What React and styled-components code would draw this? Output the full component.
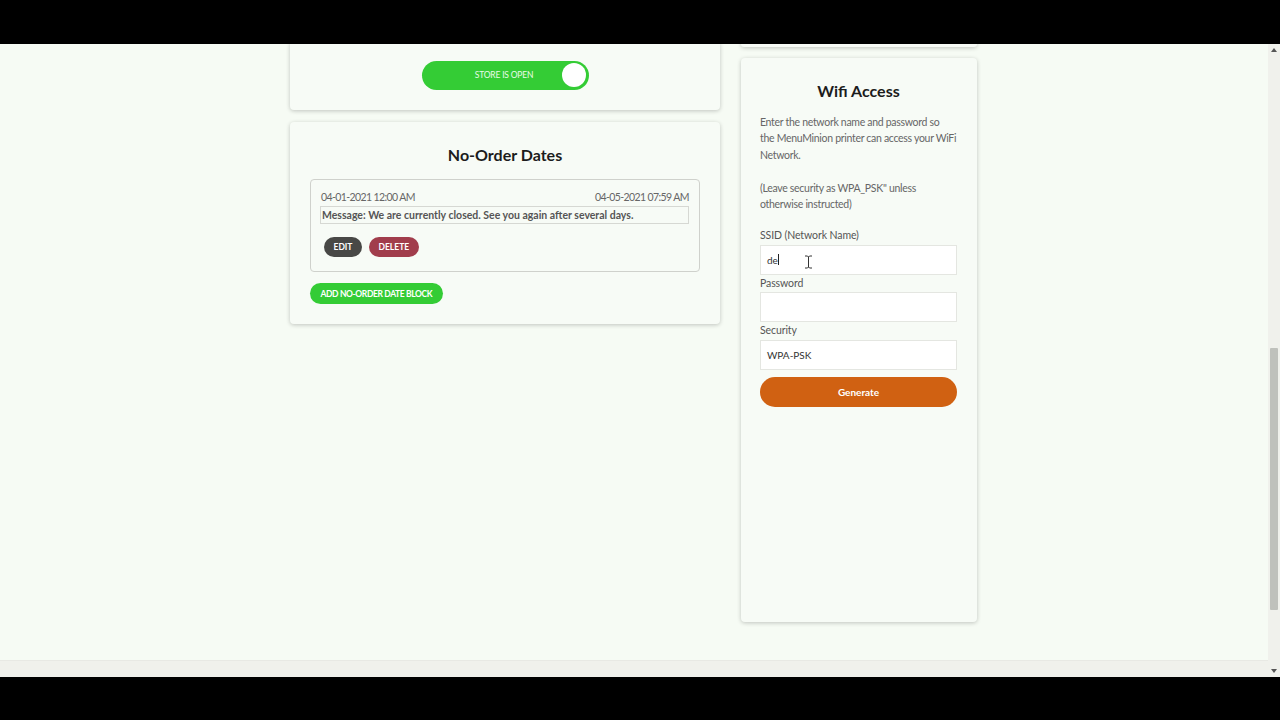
import React from 'react';
import styled, { createGlobalStyle } from 'styled-components';

const Global = createGlobalStyle`
	html, body {
		margin: 0;
		padding: 0;
		background: #000;
	}
	body {
		font-family: Lato, "Liberation Sans", sans-serif;
	}
`;

const Screen = styled.div`
	width: 1280px;
	height: 720px;
	display: flex;
	flex-direction: column;
	justify-content: center;
	background: #000;
`;

const Viewport = styled.div`
	height: 633px;
	display: flex;
	overflow: hidden;
	background: #f6fbf4;
`;

const Page = styled.div`
	flex: 1;
	display: flex;
	flex-direction: column;
	min-width: 0;
`;

const Content = styled.div`
	flex: 1;
	display: flex;
	justify-content: center;
	align-items: flex-start;
	gap: 21px;
	margin-top: -3px;
	padding-right: 1px;
	overflow: hidden;
`;

const HScrollTrack = styled.div`
	height: 16px;
	background: #f0f1ec;
	border-top: 1px solid #e8e9e4;
`;

const VScroll = styled.div`
	width: 12px;
	background: #f0f1ec;
	display: flex;
	flex-direction: column;
	align-items: center;
	padding: 4px 0;
	box-sizing: border-box;
`;

const Arrow = styled.div`
	width: 0;
	height: 0;
	border-left: 3px solid transparent;
	border-right: 3px solid transparent;
	${p => (p.$down ? 'border-top: 4px solid #555;' : 'border-bottom: 4px solid #555;')}
`;

const Thumb = styled.div`
	width: 8px;
	height: 262px;
	margin-top: 296px;
	margin-bottom: auto;
	background: #bfc1bc;
	border-radius: 1px;
`;

const Column = styled.div`
	width: ${p => p.$w}px;
	display: flex;
	flex-direction: column;
	gap: ${p => p.$gap}px;
`;

const Card = styled.section`
	background: #f7fbf6;
	border-radius: 4px;
	box-shadow: 0 1px 4px rgba(0, 0, 0, 0.22);
	padding: 20px 20px 20px ${p => p.$pl || 20}px;
	box-sizing: border-box;
	${p => (p.$h ? `height: ${p.$h}px;` : '')}
`;

const StubCard = styled(Card)`
	height: 6px;
	padding: 0;
`;

const CardTitle = styled.h2`
	margin: 0;
	text-align: center;
	font-size: 16px;
	line-height: 26px;
	font-weight: 700;
	color: #1c1c1c;
`;

const ToggleRow = styled.div`
	display: flex;
	justify-content: center;
`;

const Toggle = styled.button`
	width: 167px;
	height: 29px;
	border: none;
	border-radius: 15px;
	background: #34cc35;
	display: flex;
	align-items: center;
	justify-content: space-between;
	padding: 0 3px 0 0;
	font-family: inherit;
	cursor: pointer;
`;

const ToggleLabel = styled.span`
	flex: 1;
	text-align: center;
	font-size: 8.5px;
	letter-spacing: -0.2px;
	color: #eafbe8;
	padding-left: 25px;
`;

const Knob = styled.span`
	width: 24px;
	height: 24px;
	border-radius: 50%;
	background: #fff;
`;

const BlockBox = styled.div`
	margin-top: 11px;
	border: 1px solid #cfd1cc;
	border-radius: 4px;
	padding: 9px 10px 14px 9px;
`;

const DateRow = styled.div`
	display: flex;
	justify-content: space-between;
	padding-left: 1px;
	font-size: 10.5px;
	line-height: 17px;
	letter-spacing: -0.6px;
	color: #666;
`;

const Message = styled.div`
	border: 1px solid #d6d8d3;
	padding: 0 1px;
	font-size: 10.5px;
	line-height: 16px;
	font-weight: 700;
	color: #555;
`;

const ButtonRow = styled.div`
	display: flex;
	gap: 7px;
	margin: 13px 0 0 4px;
`;

const Pill = styled.button`
	height: ${p => p.$h || 20}px;
	border: none;
	border-radius: 11px;
	padding: 0 ${p => p.$px || 10}px;
	background: ${p => p.$bg};
	color: #fff;
	font-family: inherit;
	font-size: 8.5px;
	font-weight: 700;
	letter-spacing: ${p => p.$ls || 0}px;
	cursor: pointer;
`;

const AddRow = styled.div`
	margin-top: 9px;
`;

const Text = styled.p`
	margin: ${p => p.$mt || 0}px 0 0;
	font-size: 10.5px;
	line-height: 16.5px;
	letter-spacing: -0.3px;
	color: #666;
`;

const Label = styled.label`
	display: block;
	margin-top: ${p => p.$mt || 0}px;
	font-size: 10.5px;
	line-height: 16px;
	letter-spacing: -0.1px;
	color: #555;
`;

const Field = styled.div`
	position: relative;
	height: 30px;
	margin-top: ${p => p.$mt || 0}px;
	background: #fff;
	border: 1px solid #e4e6e1;
	box-sizing: border-box;
	display: flex;
	align-items: center;
	padding: 0 6px;
	font-size: 10px;
	color: #333;
`;

const Caret = styled.span`
	display: inline-block;
	width: 1px;
	height: 11px;
	background: #222;
	vertical-align: middle;
`;

const IBeam = styled.svg`
	position: absolute;
	left: 43px;
	top: 9px;
`;

const Generate = styled.button`
	width: 100%;
	height: 30px;
	margin-top: 7px;
	border: none;
	border-radius: 15px;
	background: #d06112;
	color: #fff;
	font-family: inherit;
	font-size: 10px;
	font-weight: 700;
	cursor: pointer;
`;

export default function App() {
	return (
		<Screen>
			<Global />
			<Viewport>
				<Page>
					<Content>
						<Column $w={430} $gap={12}>
							<Card>
								<ToggleRow>
									<Toggle>
										<ToggleLabel>STORE IS OPEN</ToggleLabel>
										<Knob />
									</Toggle>
								</ToggleRow>
							</Card>
							<Card>
								<CardTitle>No-Order Dates</CardTitle>
								<BlockBox>
									<DateRow>
										<span>04-01-2021 12:00 AM</span>
										<span>04-05-2021 07:59 AM</span>
									</DateRow>
									<Message>Message: We are currently closed. See you again after several days.</Message>
									<ButtonRow>
										<Pill $bg="#484846" $px={9.5}>EDIT</Pill>
										<Pill $bg="#a13d4c" $px={9.5}>DELETE</Pill>
									</ButtonRow>
								</BlockBox>
								<AddRow>
									<Pill $bg="#34cc35" $h={21} $px={10.5} $ls={-0.38}>ADD NO-ORDER DATE BLOCK</Pill>
								</AddRow>
							</Card>
						</Column>
						<Column $w={236} $gap={11}>
							<StubCard />
							<Card $h={564} $pl={19}>
								<CardTitle>Wifi Access</CardTitle>
								<Text $mt={10}>
									Enter the network name and password so
									<br />
									the MenuMinion printer can access your WiFi Network.
								</Text>
								<Text $mt={16.5}>(Leave security as WPA_PSK" unless otherwise instructed)</Text>
								<Label $mt={14}>SSID (Network Name)</Label>
								<Field $mt={2}>
									de<Caret />
									<IBeam width="9" height="14" viewBox="0 0 9 14">
										<path d="M1 1h2.5l1 1 1-1H8M4.5 2v10M1 13h2.5l1-1 1 1H8" fill="none" stroke="#fff" strokeWidth="2.2" />
										<path d="M1 1h2.5l1 1 1-1H8M4.5 2v10M1 13h2.5l1-1 1 1H8" fill="none" stroke="#333" strokeWidth="1" />
									</IBeam>
								</Field>
								<Label>Password</Label>
								<Field $mt={1} />
								<Label>Security</Label>
								<Field $mt={2}>WPA-PSK</Field>
								<Generate>Generate</Generate>
							</Card>
						</Column>
					</Content>
					<HScrollTrack />
				</Page>
				<VScroll>
					<Arrow />
					<Thumb />
					<Arrow $down />
				</VScroll>
			</Viewport>
		</Screen>
	);
}
